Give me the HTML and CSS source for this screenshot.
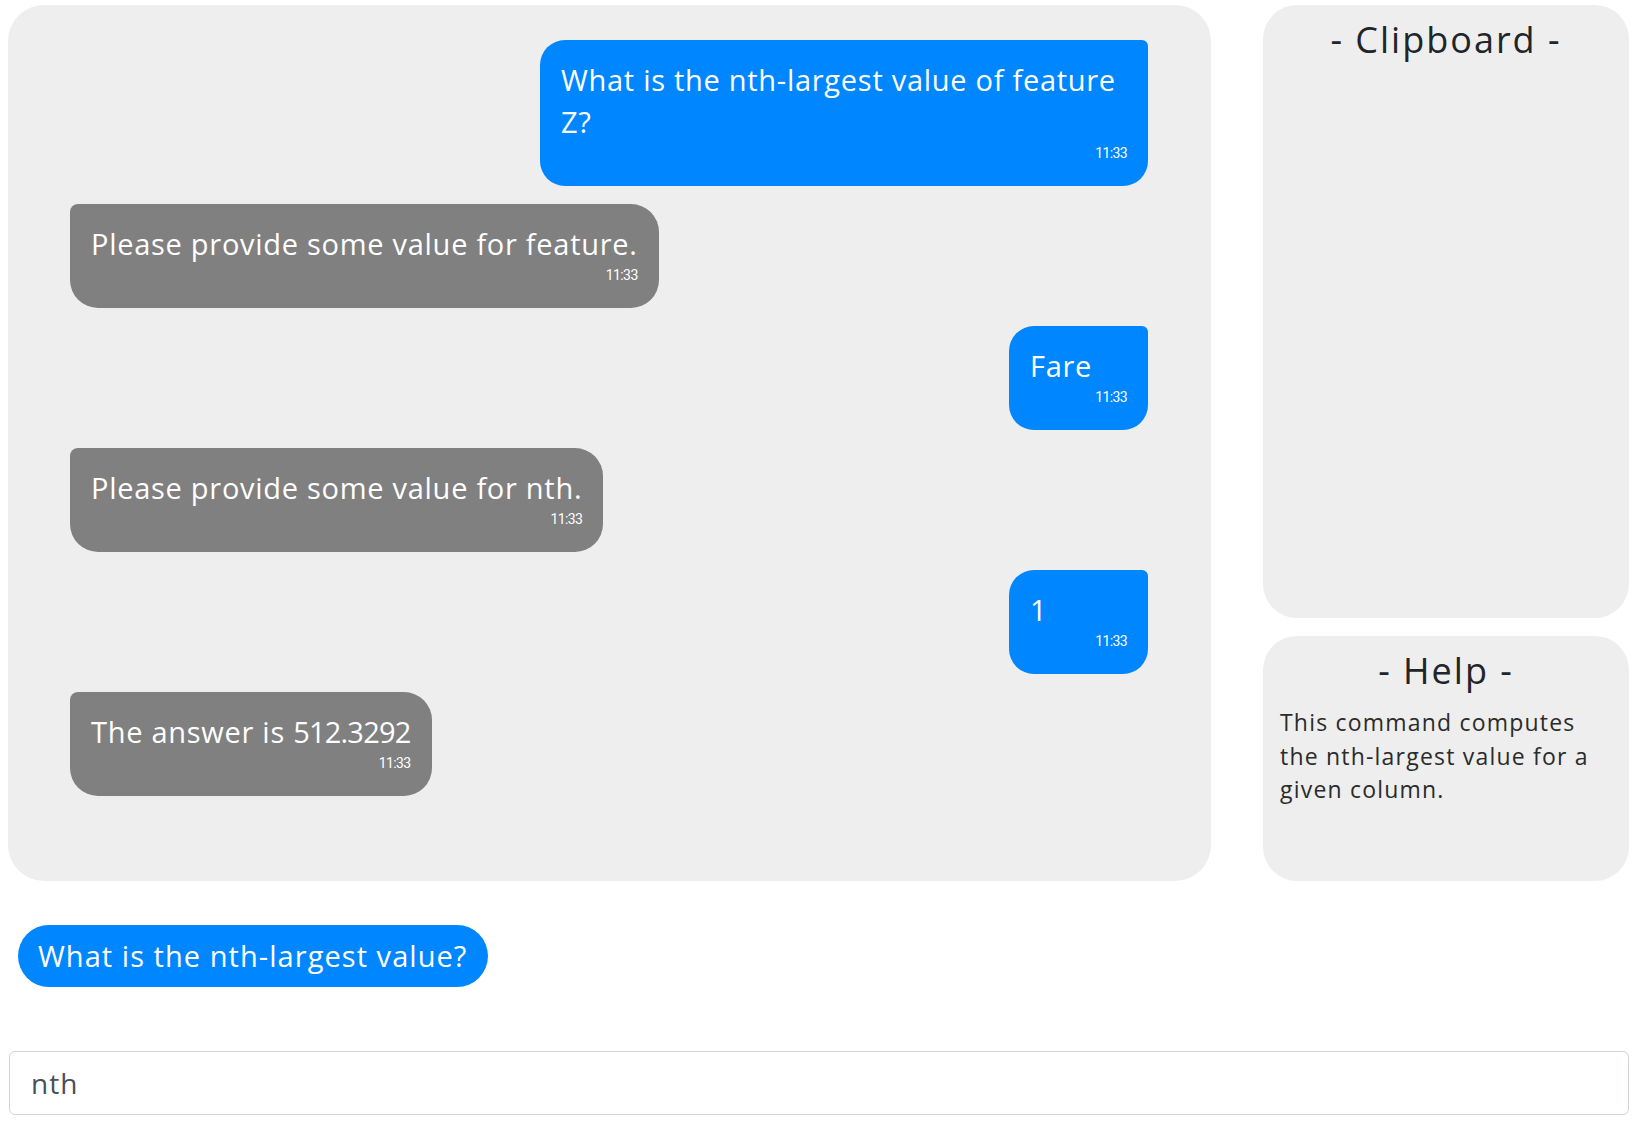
FILE: index.html
```html
<!DOCTYPE html>
<html lang="en">
<head>
<meta charset="utf-8">
<title>Chat</title>
<link rel="stylesheet" href="styles.css">
</head>
<body>
<div class="page">
  <div class="top">
    <section class="chat">
      <div class="msg user">
        <div class="text">What is the nth-largest value of feature Z?</div>
        <div class="time">11:33</div>
      </div>
      <div class="msg bot">
        <div class="text">Please provide some value for feature.</div>
        <div class="time">11:33</div>
      </div>
      <div class="msg user">
        <div class="text">Fare</div>
        <div class="time">11:33</div>
      </div>
      <div class="msg bot">
        <div class="text">Please provide some value for nth.</div>
        <div class="time">11:33</div>
      </div>
      <div class="msg user">
        <div class="text">1</div>
        <div class="time">11:33</div>
      </div>
      <div class="msg bot">
        <div class="text">The answer is <span class="num">512.3292</span></div>
        <div class="time">11:33</div>
      </div>
    </section>
    <aside class="side">
      <div class="card clip">
        <h2 class="card-title">- Clipboard -</h2>
      </div>
      <div class="card help">
        <h2 class="card-title">- Help -</h2>
        <p class="help-text">This command computes the nth-largest value for a given column.</p>
      </div>
    </aside>
  </div>
  <div class="suggest">
    <button class="chip" type="button">What is the nth-largest value?</button>
  </div>
  <input class="cmd" type="text" value="nth">
</div>
</body>
</html>
```

FILE: styles.css
```css
* { box-sizing: border-box; }
html, body { margin: 0; padding: 0; background: #fff; }
body {
  font-family: "Open Sans", "Noto Sans", sans-serif;
  color: #212529;
}
.page {
  padding: 5px 6px 0 8px;
}
.top {
  display: grid;
  grid-template-columns: 1fr 366px;
  column-gap: 52px;
  height: 876px;
}
.chat {
  background: #eeeeee;
  border-radius: 36px;
  padding: 35px 63px 0 62px;
  display: flex;
  flex-direction: column;
  gap: 18px;
}
.msg {
  max-width: 608px;
  min-width: 139px;
  padding: 19px 21px 23px 21px;
  color: #fff;
}
.msg .text {
  font-size: 29px;
  line-height: 42px;
  letter-spacing: 0.72px;
}
.num {
  letter-spacing: -0.8px;
}
.msg .time {
  font-family: "Roboto", sans-serif;
  font-size: 14px;
  line-height: 20px;
  letter-spacing: -0.6px;
  text-align: right;
}
.user {
  align-self: flex-end;
  background: #0086ff;
  border-radius: 25px 6px 25px 25px;
}
.bot {
  align-self: flex-start;
  background: #808080;
  border-radius: 8px 28px 28px 28px;
}
.side {
  display: flex;
  flex-direction: column;
  gap: 18px;
}
.card {
  background: #eeeeee;
  border-radius: 34px;
  padding: 12px 17px;
}
.clip { flex: 1; }
.help { height: 245px; flex: none; }
.card-title {
  margin: 0;
  text-align: center;
  font-weight: 400;
  font-size: 36px;
  line-height: 46px;
  color: #212529;
  letter-spacing: 2px;
}
.help-text {
  margin: 12px 0 0;
  font-size: 23px;
  line-height: 33.5px;
  color: #2b2b2b;
  letter-spacing: 1.2px;
}
.suggest {
  padding: 44px 0 0 10px;
}
.chip {
  font-family: inherit;
  font-size: 29px;
  line-height: 42px;
  letter-spacing: 1.05px;
  color: #fff;
  background: #0086ff;
  border: none;
  border-radius: 31px;
  padding: 10px 21px 10px 20px;
  margin: 0;
  cursor: pointer;
}
.cmd {
  display: block;
  margin: 64px 0 0 1px;
  width: calc(100% - 1px);
  height: 64px;
  border: 1px solid #ced4da;
  border-radius: 6px;
  padding: 0 21px;
  font-family: inherit;
  font-size: 28px;
  letter-spacing: 1px;
  color: #495057;
  background: #fff;
  outline: none;
}
```
